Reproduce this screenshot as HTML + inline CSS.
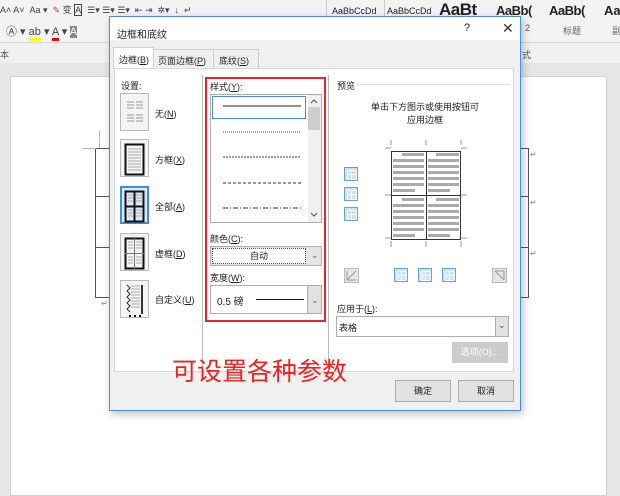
<!DOCTYPE html>
<html><head><meta charset="utf-8"><style>
*{margin:0;padding:0;box-sizing:border-box}
body{width:620px;height:487px;overflow:hidden;background:#e6e6e6;font-family:"Liberation Sans","Noto Sans CJK SC",sans-serif;font-size:9px;color:#222;position:relative}
.a{position:absolute}
.t{position:absolute;white-space:nowrap;font-size:9px}
.box{position:absolute;border:1px solid #adadad;background:#fff}
.btn{position:absolute;border:1px solid #adadad;background:#e1e1e1;text-align:center;font-size:9px}
.ic{position:absolute;width:14px;height:14px;border:1px solid #6a9fd4;background:#cfe3f7}
.ic:after{content:"";position:absolute;left:2px;top:2px;width:8px;height:8px;border:1px solid #fff;background:linear-gradient(#fff,#fff) 3px 0/1px 8px no-repeat,linear-gradient(#fff,#fff) 0 3px/8px 1px no-repeat}
.set{position:absolute;left:120px;width:29px;height:38px;border:1px solid #bbb;background:#f4f4f4}
</style></head><body>
<!-- ribbon -->
<div class="a" style="left:0;top:0;width:620px;height:42px;background:#f3f3f3"></div>
<div class="t" style="left:0;top:3px;font-size:9px;color:#444">A˄ A˅ &nbsp;Aa ▾ &nbsp;<span style="color:#d33">✎</span> 变 <span style="border:1px solid #444">A</span> &nbsp;☰▾ ☰▾ ☰▾ &nbsp;⇤ ⇥ &nbsp;✲▾ &nbsp;↓ &nbsp;↵</div>
<div class="t" style="left:6px;top:23px;font-size:11px;color:#444">Ⓐ ▾ <span style="border-bottom:3px solid #ff0">ab</span> ▾ <span style="border-bottom:3px solid #e00">A</span> ▾ <span style="background:#888;color:#fff">A</span></div>
<div class="a" style="left:326px;top:0;width:1px;height:40px;background:#ccc"></div>
<div class="a" style="left:384px;top:0;width:1px;height:20px;background:#ccc"></div>
<div class="t" style="left:332px;top:6px;font-size:9px">AaBbCcDd</div>
<div class="t" style="left:387px;top:6px;font-size:9px">AaBbCcDd</div>
<div class="t" style="left:439px;top:0;font-size:17px;font-weight:bold;letter-spacing:-0.5px">AaBt</div>
<div class="t" style="left:496px;top:3px;font-size:13px;font-weight:bold;letter-spacing:-0.5px">AaBb(</div>
<div class="t" style="left:549px;top:3px;font-size:13px;font-weight:bold;letter-spacing:-0.5px">AaBb(</div>
<div class="t" style="left:604px;top:3px;font-size:13px;font-weight:bold">Aa</div>
<div class="t" style="left:525px;top:23px;color:#555">2</div>
<div class="t" style="left:563px;top:24px;color:#666">标题</div>
<div class="t" style="left:612px;top:24px;color:#666">副</div>
<div class="a" style="left:0;top:42px;width:620px;height:1px;background:#d8d8d8"></div>
<div class="a" style="left:0;top:43px;width:620px;height:20px;background:#f1f1f1"></div>
<div class="t" style="left:0;top:48px;color:#555">本</div>
<div class="t" style="left:522px;top:48px;color:#555">式</div>
<!-- page -->
<div class="a" style="left:10px;top:76px;width:597px;height:420px;background:#fff;border:1px solid #d0d0d0"></div>
<div class="a" style="left:95px;top:148px;width:1px;height:150px;background:#555"></div>
<div class="a" style="left:95px;top:148px;width:20px;height:1px;background:#555"></div>
<div class="a" style="left:95px;top:196px;width:20px;height:1px;background:#555"></div>
<div class="a" style="left:95px;top:247px;width:20px;height:1px;background:#555"></div>
<div class="a" style="left:95px;top:297px;width:20px;height:1px;background:#555"></div>
<div class="a" style="left:82px;top:148px;width:14px;height:1px;background:#bbb"></div>
<div class="a" style="left:99px;top:131px;width:1px;height:17px;background:#bbb"></div>
<div class="a" style="left:528px;top:148px;width:1px;height:150px;background:#555"></div>
<div class="a" style="left:515px;top:148px;width:14px;height:1px;background:#555"></div>
<div class="a" style="left:515px;top:196px;width:14px;height:1px;background:#555"></div>
<div class="a" style="left:515px;top:247px;width:14px;height:1px;background:#555"></div>
<div class="a" style="left:515px;top:297px;width:14px;height:1px;background:#555"></div>
<div class="t" style="left:530px;top:150px;color:#888;font-size:8px">↵</div>
<div class="t" style="left:530px;top:198px;color:#888;font-size:8px">↵</div>
<div class="t" style="left:530px;top:249px;color:#888;font-size:8px">↵</div>
<div class="t" style="left:101px;top:299px;color:#888;font-size:8px">↵</div>
<!-- dialog -->
<div class="a" style="left:109px;top:16px;width:412px;height:395px;background:#f0f0f0;border:1px solid #4a90d9;box-shadow:2px 3px 8px rgba(0,0,0,.25)"></div>
<div class="a" style="left:110px;top:17px;width:410px;height:23px;background:#fff"></div>
<div class="t" style="left:117px;top:26px;font-size:10px">边框和底纹</div>
<div class="t" style="left:464px;top:22px;font-size:11px">?</div>
<div class="t" style="left:502px;top:20px;font-size:14px;color:#333">✕</div>
<!-- tabs -->
<div class="a" style="left:113px;top:47px;width:41px;height:22px;background:#fff;border:1px solid #d0d0d0;border-bottom:none"></div>
<div class="t" style="left:119px;top:53px">边框(<u>B</u>)</div>
<div class="a" style="left:154px;top:49px;width:60px;height:19px;border:1px solid #d0d0d0;border-bottom:none;border-left:none"></div>
<div class="t" style="left:158px;top:54px">页面边框(<u>P</u>)</div>
<div class="a" style="left:214px;top:49px;width:45px;height:19px;border:1px solid #d0d0d0;border-bottom:none;border-left:none"></div>
<div class="t" style="left:219px;top:54px">底纹(<u>S</u>)</div>
<div class="a" style="left:114px;top:68px;width:400px;height:304px;background:#fff;border:1px solid #d9d9d9"></div>
<div class="a" style="left:202px;top:75px;width:1px;height:297px;background:#bbb"></div>
<div class="a" style="left:328px;top:75px;width:1px;height:297px;background:#bbb"></div>
<!-- settings -->
<div class="t" style="left:121px;top:79px">设置:</div>
<div class="set" style="top:93px"></div>
<div class="set" style="top:139px"></div>
<div class="set" style="top:186px;border:2px solid #3c8ce0;background:#dde9f7"></div>
<div class="set" style="top:233px"></div>
<div class="set" style="top:280px"></div>
<svg class="a" style="left:120px;top:93px" width="30" height="230">
<g stroke="#999" stroke-width="1">
<path d="M7 9h7M16 9h7M7 12h7M16 12h7M7 15h7M16 15h7M7 22h7M16 22h7M7 25h7M16 25h7M7 28h7M16 28h7"/>
</g>
<rect x="5.5" y="51.5" width="18" height="30" fill="none" stroke="#111" stroke-width="2"/>
<path d="M8 56h13M8 59h13M8 62h13M8 65h13M8 68h13M8 71h13M8 74h13M8 77h13" stroke="#aaa"/>
<rect x="5.5" y="98.5" width="18" height="30" fill="none" stroke="#111" stroke-width="2"/>
<path d="M14.5 98v31M5 113.5h19" stroke="#111" stroke-width="2"/>
<path d="M8 102h5M16 102h6M8 105h5M16 105h6M8 108h5M16 108h6M8 117h5M16 117h6M8 120h5M16 120h6M8 123h5M16 123h6" stroke="#aaa"/>
<rect x="5.5" y="145.5" width="18" height="30" fill="none" stroke="#111" stroke-width="2"/>
<path d="M14.5 145v31M5 160.5h19" stroke="#777" stroke-width="1"/>
<path d="M8 149h5M16 149h6M8 152h5M16 152h6M8 155h5M16 155h6M8 164h5M16 164h6M8 167h5M16 167h6M8 170h5M16 170h6" stroke="#aaa"/>
<path d="M7 192l3 3-3 3 3 3-3 3 3 3-3 3 3 3-3 3 3 3" fill="none" stroke="#333"/>
<path d="M22 192v29" stroke="#333" stroke-width="2"/>
<path d="M9 223h2M14 223h2M19 223h2" stroke="#111" stroke-width="2"/>
<path d="M11 193h9M11 196h9M11 199h9M11 202h9M11 205h9M11 208h9M11 211h9M11 214h9" stroke="#aaa"/>
</svg>
<div class="t" style="left:155px;top:107px">无(<u>N</u>)</div>
<div class="t" style="left:155px;top:153px">方框(<u>X</u>)</div>
<div class="t" style="left:155px;top:200px">全部(<u>A</u>)</div>
<div class="t" style="left:155px;top:247px">虚框(<u>D</u>)</div>
<div class="t" style="left:155px;top:293px">自定义(<u>U</u>)</div>
<!-- red rect -->
<div class="a" style="left:205px;top:77px;width:121px;height:245px;border:2px solid #e8252b"></div>
<div class="t" style="left:210px;top:80px">样式(<u>Y</u>):</div>
<div class="box" style="left:210px;top:94px;width:112px;height:129px"></div>
<div class="a" style="left:212px;top:96px;width:94px;height:23px;border:1px solid #4a90d9"></div>
<svg class="a" style="left:210px;top:94px" width="112" height="129">
<path d="M13 12h78" stroke="#222"/>
<path d="M13 38h78" stroke="#555" stroke-dasharray="1 1"/>
<path d="M13 63h78" stroke="#444" stroke-dasharray="2 1"/>
<path d="M13 89h78" stroke="#333" stroke-dasharray="3 2"/>
<path d="M13 114h78" stroke="#333" stroke-dasharray="5 2 1 2"/>
<rect x="98" y="1" width="13" height="127" fill="#f0f0f0"/>
<rect x="98" y="13" width="12" height="23" fill="#cdcdcd"/>
<path d="M101 9l3-3 3 3M101 119l3 3 3-3" fill="none" stroke="#555"/>
</svg>
<div class="t" style="left:210px;top:232px">颜色(<u>C</u>):</div>
<div class="a" style="left:210px;top:246px;width:112px;height:20px;border:1px solid #adadad;background:#e5e5e5"></div>
<div class="a" style="left:212px;top:248px;width:94px;height:16px;border:1px dotted #555;background:#fff;text-align:center;line-height:14px">自动</div>
<div class="t" style="left:311px;top:250px;color:#666">⌄</div>
<div class="t" style="left:210px;top:271px">宽度(<u>W</u>):</div>
<div class="box" style="left:210px;top:285px;width:112px;height:29px"></div>
<div class="t" style="left:217px;top:293px;font-size:10px">0.5 磅</div>
<div class="a" style="left:256px;top:299px;width:48px;height:1px;background:#222"></div>
<div class="a" style="left:307px;top:286px;width:14px;height:27px;background:#e1e1e1;border-left:1px solid #adadad"></div>
<div class="t" style="left:311px;top:295px;color:#666">⌄</div>
<!-- preview -->
<div class="t" style="left:337px;top:79px">预览</div>
<div class="a" style="left:357px;top:84px;width:153px;height:1px;background:#ddd"></div>
<div class="t" style="left:371px;top:100px">单击下方图示或使用按钮可</div>
<div class="t" style="left:407px;top:113px">应用边框</div>
<svg class="a" style="left:380px;top:140px" width="90" height="108">
<g stroke="#999"><path d="M11 8h-6M11 5v-6M81 8h6M81 5v-6M46 5v-6M11 98h-6M11 101v6M81 98h6M81 101v6M46 101v6M11 55h-6M81 55h6"/></g>
<g fill="#aaa">
<rect x="22" y="13" width="22" height="3"/><rect x="13" y="19" width="31" height="3"/><rect x="13" y="25" width="31" height="3"/><rect x="13" y="31" width="31" height="3"/><rect x="13" y="37" width="31" height="3"/><rect x="13" y="43" width="31" height="3"/><rect x="13" y="49" width="22" height="3"/>
<rect x="56" y="13" width="23" height="3"/><rect x="48" y="19" width="31" height="3"/><rect x="48" y="25" width="31" height="3"/><rect x="48" y="31" width="31" height="3"/><rect x="48" y="37" width="31" height="3"/><rect x="48" y="43" width="31" height="3"/><rect x="48" y="49" width="22" height="3"/>
<rect x="22" y="58" width="22" height="3"/><rect x="13" y="64" width="31" height="3"/><rect x="13" y="70" width="31" height="3"/><rect x="13" y="76" width="31" height="3"/><rect x="13" y="82" width="31" height="3"/><rect x="13" y="88" width="31" height="3"/><rect x="13" y="94" width="22" height="3"/>
<rect x="56" y="58" width="23" height="3"/><rect x="48" y="64" width="31" height="3"/><rect x="48" y="70" width="31" height="3"/><rect x="48" y="76" width="31" height="3"/><rect x="48" y="82" width="31" height="3"/><rect x="48" y="88" width="31" height="3"/><rect x="48" y="94" width="22" height="3"/>
</g>
<rect x="11.5" y="11.5" width="69" height="88" fill="none" stroke="#333"/>
<path d="M46.5 11v89M11 55.5h70" stroke="#333"/>
</svg>
<div class="ic" style="left:344px;top:167px"></div>
<div class="ic" style="left:344px;top:187px"></div>
<div class="ic" style="left:344px;top:207px"></div>
<div class="ic" style="left:394px;top:268px"></div>
<div class="ic" style="left:418px;top:268px"></div>
<div class="ic" style="left:442px;top:268px"></div>
<svg class="a" style="left:344px;top:268px" width="16" height="16"><rect x="0.5" y="0.5" width="14" height="14" fill="#e6e6e6" stroke="#bbb"/><path d="M3 12L12 3M3 3v9h9" fill="none" stroke="#999"/></svg>
<svg class="a" style="left:492px;top:268px" width="16" height="16"><rect x="0.5" y="0.5" width="14" height="14" fill="#e6e6e6" stroke="#bbb"/><path d="M3 3l9 9M3 3h9v9" fill="none" stroke="#999"/></svg>
<div class="t" style="left:337px;top:302px">应用于(<u>L</u>):</div>
<div class="box" style="left:336px;top:316px;width:173px;height:21px"></div>
<div class="t" style="left:339px;top:321px">表格</div>
<div class="a" style="left:495px;top:317px;width:13px;height:19px;background:#e1e1e1;border-left:1px solid #adadad"></div>
<div class="t" style="left:498px;top:320px;color:#555">⌄</div>
<div class="btn" style="left:452px;top:342px;width:56px;height:21px;background:#ccc;border-color:#ccc;color:#fff;line-height:19px">选项(O)...</div>
<div class="t" style="left:172px;top:352px;font-size:25px;color:#f51f1f;font-family:'Noto Sans CJK SC',sans-serif">可设置各种参数</div>
<div class="btn" style="left:395px;top:380px;width:56px;height:22px;line-height:20px">确定</div>
<div class="btn" style="left:458px;top:380px;width:56px;height:22px;line-height:20px">取消</div>
</body></html>
